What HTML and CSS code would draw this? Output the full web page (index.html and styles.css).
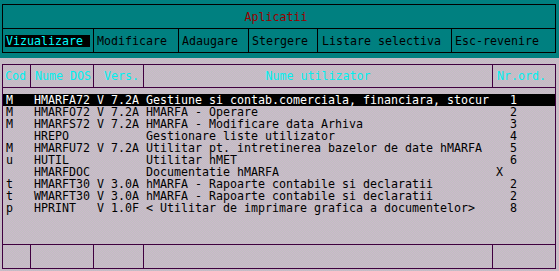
FILE: index.html
```html
<!DOCTYPE html>
<html lang="ro">
<head>
    <meta charset="UTF-8">
    <meta name="viewport" content="width=device-width, initial-scale=1.0">
    <title>Aplicatii</title>
    <link rel="stylesheet" href="styles.css">
</head>
<body>
    <header class="top">
        <div class="frame">
            <h1 class="frame__title">Aplicatii</h1>
            <nav class="menu">
                <div class="menu__item"><span class="menu__label menu__label--active">Vizualizare </span></div>
                <div class="menu__item"><span class="menu__label">Modificare</span></div>
                <div class="menu__item"><span class="menu__label">Adaugare</span></div>
                <div class="menu__item"><span class="menu__label">Stergere</span></div>
                <div class="menu__item menu__item--wide"><span class="menu__label">Listare selectiva</span></div>
                <div class="menu__item"><span class="menu__label">Esc-revenire</span></div>
            </nav>
        </div>
    </header>

    <main class="apps">
        <div class="apps__cols apps__head">
            <div class="apps__cell apps__cell--cod">Cod</div>
            <div class="apps__cell apps__cell--dos">Nume DOS</div>
            <div class="apps__cell apps__cell--vers">Vers.</div>
            <div class="apps__cell apps__cell--name">Nume utilizator</div>
            <div class="apps__cell apps__cell--nr">Nr.ord.</div>
        </div>

        <div class="apps__list">
            <div class="apps__row apps__row--selected">M   HMARFA72 V 7.2A Gestiune si contab.comerciala, financiara, stocur   1</div>
            <div class="apps__row">M   HMARFO72 V 7.2A HMARFA - Operare                                    2</div>
            <div class="apps__row">M   HMARFS72 V 7.2A HMARFA - Modificare data Arhiva                     3</div>
            <div class="apps__row">    HREPO           Gestionare liste utilizator                         4</div>
            <div class="apps__row">M   HMARFU72 V 7.2A Utilitar pt. intretinerea bazelor de date hMARFA    5</div>
            <div class="apps__row">u   HUTIL           Utilitar hMET                                       6</div>
            <div class="apps__row">    HMARFDOC        Documentatie hMARFA                               X</div>
            <div class="apps__row">t   HMARFT30 V 3.0A hMARFA - Rapoarte contabile si declaratii           2</div>
            <div class="apps__row">t   WMARFT30 V 3.0A hMARFA - Rapoarte contabile si declaratii           2</div>
            <div class="apps__row">p   HPRINT   V 1.0F &lt; Utilitar de imprimare grafica a documentelor&gt;     8</div>
        </div>

        <div class="apps__cols apps__foot">
            <div class="apps__cell"></div>
            <div class="apps__cell"></div>
            <div class="apps__cell"></div>
            <div class="apps__cell"></div>
            <div class="apps__cell"></div>
        </div>
    </main>
</body>
</html>
```
FILE: styles.css
```css
body {
    margin: 0;
    width: 559px;
    height: 271px;
    overflow: hidden;
    font-family: 'DejaVu Sans Mono', 'Liberation Mono', monospace;
    font-size: 11.63px;
    line-height: 12px;
    color: #000;
    background-color: #c6bcc6;
    background-image: repeating-conic-gradient(#c0c0c0 0 25%, #ccb8cc 0 50%);
    background-size: 2px 2px;
}

/* teal window with title and menu */
.top {
    height: 58px;
    box-sizing: border-box;
    padding: 4px 0 0 2px;
    background-color: #008080;
}

.frame {
    width: 554px;
    box-sizing: border-box;
    border: 1px solid #000;
}

.frame__title {
    margin: 0;
    height: 23px;
    padding-right: 6px;
    display: flex;
    align-items: center;
    justify-content: center;
    font-size: inherit;
    font-weight: normal;
    color: #9a0000;
    border-bottom: 1px solid #000;
}

.menu {
    display: grid;
    grid-template-columns: 91px 85px 70px 69px 134px 1fr;
    height: 23px;
}

.menu__item {
    display: flex;
    align-items: center;
    padding-left: 2px;
    border-right: 1px solid #000;
}

.menu__item:last-child {
    border-right: none;
}

.menu__item--wide {
    padding-left: 3px;
}

.menu__label {
    padding-left: 1px;
    white-space: pre;
}

.menu__label--active {
    background-color: #000;
    color: #00ffff;
}

/* table of applications */
.apps {
    width: 554px;
    height: 205px;
    margin: 6px 0 0 2px;
    box-sizing: border-box;
    border: 1px solid #400040;
    display: flex;
    flex-direction: column;
}

.apps__cols {
    display: grid;
    grid-template-columns: 28px 63px 50px 349px 1fr;
}

.apps__head {
    height: 22px;
    border-bottom: 1px solid #400040;
    color: #00f0f0;
}

.apps__foot {
    height: 23px;
    border-top: 1px solid #400040;
}

.apps__cell {
    display: flex;
    align-items: center;
    white-space: pre;
    border-right: 1px solid #400040;
}

.apps__cell:last-child {
    border-right: none;
}

.apps__cell--cod {
    padding-left: 2px;
}

.apps__cell--dos {
    padding-left: 4px;
}

.apps__cell--vers {
    padding-left: 10px;
}

.apps__cell--name {
    justify-content: center;
}

.apps__cell--nr {
    padding-left: 4px;
}

.apps__list {
    flex: 1;
    padding-top: 6px;
}

.apps__row {
    height: 12px;
    padding-left: 3px;
    white-space: pre;
}

.apps__row--selected {
    background-color: #000;
    color: #fff;
}
```
